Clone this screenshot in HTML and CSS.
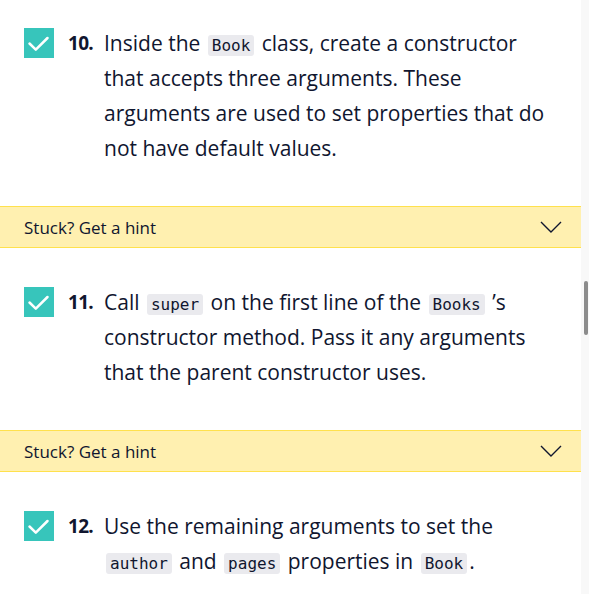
FILE: index.html
```html
<!DOCTYPE html>
<html>
<head>
<meta charset="utf-8">
<link rel="stylesheet" href="styles.css">
</head>
<body>
<div class="page">
  <main class="content">
    <div class="task task-first">
      <span class="check"><svg viewBox="0 0 30 30" width="30" height="30"><path d="M5.5 15.5 L11.8 21.6 L23.5 10" fill="none" stroke="#fff" stroke-width="2.5" stroke-linecap="round" stroke-linejoin="round"/></svg></span>
      <span class="num">10.</span>
      <p class="text">Inside the <code>Book</code> class, create a constructor that accepts three arguments. These arguments are used to set properties that do not have default values.</p>
    </div>
    <div class="hint"><span>Stuck? Get a hint</span><svg class="chev" viewBox="0 0 22 12" width="22" height="12"><path d="M1 1 L11 11 L21 1" fill="none" stroke="#10162f" stroke-width="1.4"/></svg></div>
    <div class="task">
      <span class="check"><svg viewBox="0 0 30 30" width="30" height="30"><path d="M5.5 15.5 L11.8 21.6 L23.5 10" fill="none" stroke="#fff" stroke-width="2.5" stroke-linecap="round" stroke-linejoin="round"/></svg></span>
      <span class="num">11.</span>
      <p class="text">Call <code>super</code> on the first line of the <code>Books</code> ’s constructor method. Pass it any arguments that the parent constructor uses.</p>
    </div>
    <div class="hint"><span>Stuck? Get a hint</span><svg class="chev" viewBox="0 0 22 12" width="22" height="12"><path d="M1 1 L11 11 L21 1" fill="none" stroke="#10162f" stroke-width="1.4"/></svg></div>
    <div class="task">
      <span class="check"><svg viewBox="0 0 30 30" width="30" height="30"><path d="M5.5 15.5 L11.8 21.6 L23.5 10" fill="none" stroke="#fff" stroke-width="2.5" stroke-linecap="round" stroke-linejoin="round"/></svg></span>
      <span class="num">12.</span>
      <p class="text">Use the remaining arguments to set the <code>author</code> and <code>pages</code> properties in <code>Book</code>.</p>
    </div>
  </main>
  <div class="scrollbar"><div class="thumb"></div></div>
</div>
</body>
</html>
```
FILE: styles.css
```css
html, body {
  margin: 0;
  padding: 0;
  background: #ffffff;
}
.page {
  display: flex;
  width: 589px;
  height: 594px;
  overflow: hidden;
}
.content {
  width: 581px;
  flex: none;
  color: #10162f;
  font-family: "Open Sans", Lato, sans-serif;
}
.scrollbar {
  width: 8px;
  flex: none;
  background: #f8f8f8;
  padding-top: 281px;
}
.thumb {
  width: 4px;
  margin-left: 3px;
  height: 54px;
  border-radius: 3px;
  background: #8c8c8c;
}
.task {
  display: flex;
  align-items: flex-start;
  padding: 37px 0 0 24px;
}
.task-first {
  padding-top: 26px;
}
.check {
  width: 30px;
  height: 30px;
  flex: none;
  background: #37c5bb;
  display: flex;
  margin-top: 2px;
}
.num {
  width: 36px;
  flex: none;
  margin-left: 14px;
  font-weight: 700;
  font-size: 19px;
  line-height: 35px;
  letter-spacing: -0.7px;
}
.text {
  margin: 0;
  width: 446px;
  font-size: 21px;
  line-height: 35px;
}
code {
  font-family: "DejaVu Sans Mono", monospace;
  font-size: 16px;
  line-height: 1;
  background: #eaeaee;
  border-radius: 3px;
  padding: 1px 4px;
  margin: 0 2px;
}
.hint {
  margin-top: 40px;
  display: flex;
  align-items: center;
  justify-content: space-between;
  height: 40px;
  padding: 0 19px 0 24px;
  background: #fff0b0;
  border-top: 1px solid #ffe14d;
  border-bottom: 1px solid #ffe14d;
  font-size: 17px;
}
```
